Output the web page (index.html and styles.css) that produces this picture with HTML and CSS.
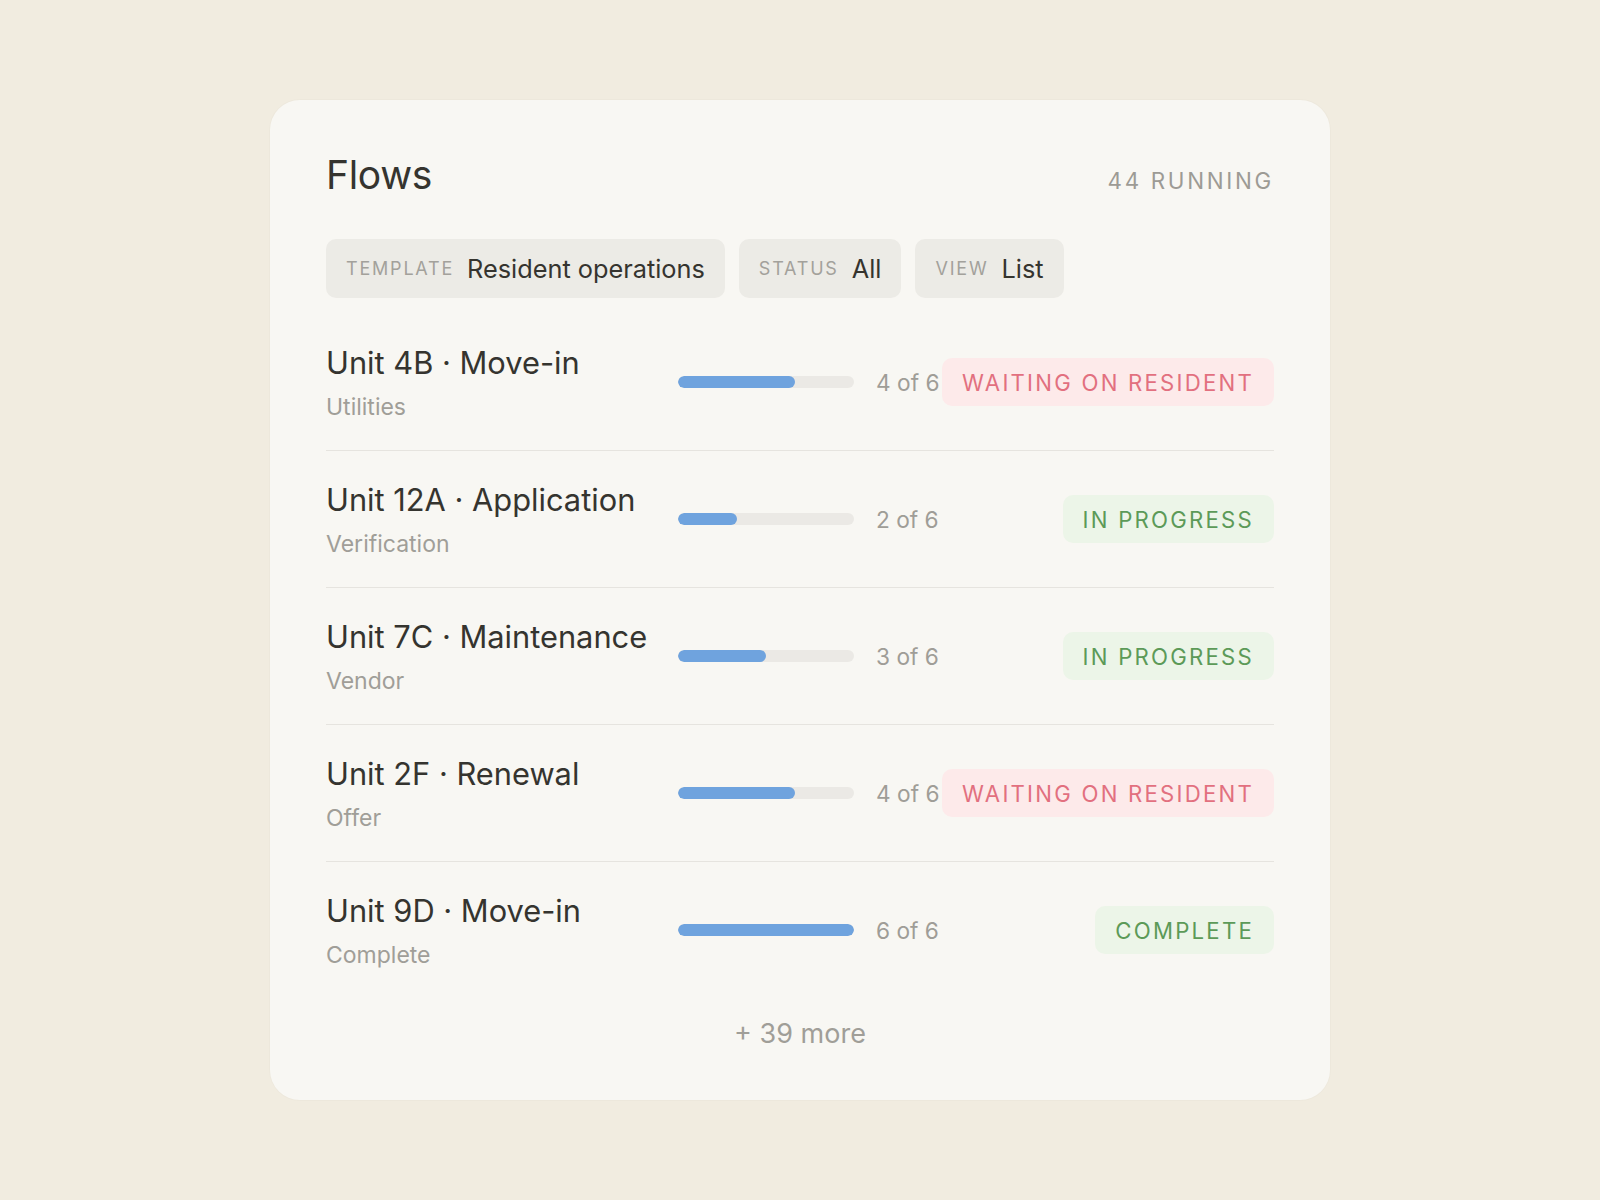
FILE: index.html
```html
<!DOCTYPE html>
<html lang="en">
<head>
<meta charset="utf-8">
<title>Flows</title>
<link rel="stylesheet" href="styles.css">
</head>
<body>
<main class="card">
  <header class="card-head">
    <h1 class="title">Flows</h1>
    <span class="running">44 RUNNING</span>
  </header>
  <div class="filters">
    <div class="chip"><span class="chip-label">TEMPLATE</span><span class="chip-value">Resident operations</span></div>
    <div class="chip"><span class="chip-label">STATUS</span><span class="chip-value">All</span></div>
    <div class="chip"><span class="chip-label">VIEW</span><span class="chip-value">List</span></div>
  </div>
  <ul class="rows">
    <li class="row">
      <div class="row-text"><div class="row-title">Unit 4B · Move-in</div><div class="row-sub">Utilities</div></div>
      <div class="bar"><div class="bar-fill" style="width: 66.67%"></div></div>
      <span class="count">4 of 6</span>
      <span class="badge badge-wait">WAITING ON RESIDENT</span>
    </li>
    <li class="row">
      <div class="row-text"><div class="row-title">Unit 12A · Application</div><div class="row-sub">Verification</div></div>
      <div class="bar"><div class="bar-fill" style="width: 33.33%"></div></div>
      <span class="count">2 of 6</span>
      <span class="badge badge-ok">IN PROGRESS</span>
    </li>
    <li class="row">
      <div class="row-text"><div class="row-title">Unit 7C · Maintenance</div><div class="row-sub">Vendor</div></div>
      <div class="bar"><div class="bar-fill" style="width: 50%"></div></div>
      <span class="count">3 of 6</span>
      <span class="badge badge-ok">IN PROGRESS</span>
    </li>
    <li class="row">
      <div class="row-text"><div class="row-title">Unit 2F · Renewal</div><div class="row-sub">Offer</div></div>
      <div class="bar"><div class="bar-fill" style="width: 66.67%"></div></div>
      <span class="count">4 of 6</span>
      <span class="badge badge-wait">WAITING ON RESIDENT</span>
    </li>
    <li class="row">
      <div class="row-text"><div class="row-title">Unit 9D · Move-in</div><div class="row-sub">Complete</div></div>
      <div class="bar"><div class="bar-fill" style="width: 100%"></div></div>
      <span class="count">6 of 6</span>
      <span class="badge badge-ok">COMPLETE</span>
    </li>
  </ul>
  <div class="more">+ 39 more</div>
</main>
</body>
</html>
```
FILE: styles.css
```css
* { box-sizing: border-box; }
html, body { margin: 0; padding: 0; }
body {
  background: #f1ece0;
  font-family: "Inter", "Liberation Sans", sans-serif;
  color: #37362f;
  min-height: 1200px;
  display: flex;
  align-items: flex-start;
  justify-content: center;
  padding-top: 100px;
}
.card {
  width: 1060px;
  height: 1000px;
  background: #f8f7f3;
  border-radius: 30px;
  padding: 52px 56px 48px;
  box-shadow: 0 0 0 1px rgba(0,0,0,0.015);
}
.card-head {
  display: flex;
  justify-content: space-between;
  align-items: baseline;
  height: 48px;
}
.title {
  margin: 0;
  font-size: 39px;
  line-height: 46px;
  font-weight: 400;
  color: #35342f;
  letter-spacing: -0.3px;
}
.running {
  font-size: 22.4px;
  letter-spacing: 0.12em;
  color: #9d9b95;
  margin-bottom: 1px;
}
.filters {
  display: flex;
  gap: 14px;
  margin-top: 39px;
}
.chip {
  height: 59px;
  display: flex;
  align-items: center;
  gap: 13px;
  padding: 0 20px;
  background: #ecebe6;
  border-radius: 10px;
}
.chip-label {
  font-size: 18px;
  letter-spacing: 0.1em;
  color: #a3a19b;
}
.chip-value {
  font-size: 25.3px;
  color: #35342f;
}
.rows {
  list-style: none;
  margin: 16px 0 0;
  padding: 0;
}
.row {
  display: flex;
  align-items: center;
  height: 137px;
  border-bottom: 1px solid #e6e4df;
}
.row:last-child { border-bottom: none; height: 136px; }
.row-text {
  width: 352px;
  flex: none;
}
.row-title {
  font-size: 30.8px;
  line-height: 42px;
  color: #35342f;
}
.row-sub {
  margin-top: 8px;
  font-size: 23px;
  line-height: 30px;
  color: #a09e98;
}
.bar {
  width: 176px;
  height: 12px;
  flex: none;
  background: #ebe9e5;
  border-radius: 6px;
  overflow: hidden;
}
.bar-fill {
  height: 100%;
  background: #6fa3de;
  border-radius: 6px;
}
.count {
  margin-left: 22px;
  font-size: 22.7px;
  color: #9f9d97;
  white-space: nowrap;
}
.badge {
  margin-left: auto;
  height: 48px;
  display: flex;
  align-items: center;
  padding: 0 20px;
  border-radius: 10px;
  font-size: 22.2px;
  letter-spacing: 0.1em;
  white-space: nowrap;
}
.badge-wait { background: #fdeaea; color: #e2707f; }
.badge-ok { background: #ecf5e8; color: #5c9a58; }
.more {
  margin-top: 18px;
  text-align: center;
  font-size: 27px;
  line-height: 36px;
  color: #a09e98;
}
```
